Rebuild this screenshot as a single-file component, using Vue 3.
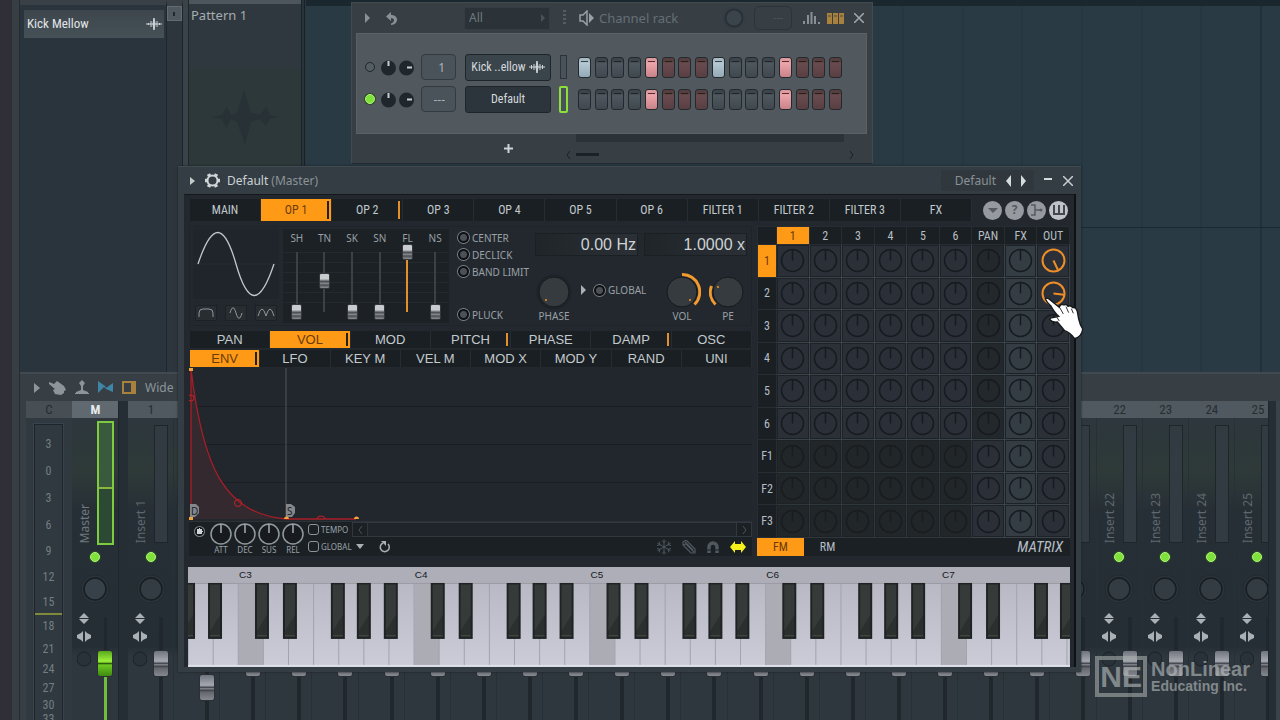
<script setup>
const mainTabs = ['MAIN', 'OP 1', 'OP 2', 'OP 3', 'OP 4', 'OP 5', 'OP 6', 'FILTER 1', 'FILTER 2', 'FILTER 3', 'FX']
const targetTabs = ['PAN', 'VOL', 'MOD', 'PITCH', 'PHASE', 'DAMP', 'OSC']
const sourceTabs = ['ENV', 'LFO', 'KEY M', 'VEL M', 'MOD X', 'MOD Y', 'RAND', 'UNI']
const shapers = [
  { name: 'SH', value: 0 },
  { name: 'TN', value: 51 },
  { name: 'SK', value: 0 },
  { name: 'SN', value: 0 },
  { name: 'FL', value: 100 },
  { name: 'NS', value: 0 },
]
const toggles = ['CENTER', 'DECLICK', 'BAND LIMIT', 'PLUCK']
const envKnobs = ['ATT', 'DEC', 'SUS', 'REL']
const matrixCols = ['1', '2', '3', '4', '5', '6', 'PAN', 'FX', 'OUT']
const matrixRows = ['1', '2', '3', '4', '5', '6', 'F1', 'F2', 'F3']

function cellClass(r, c) {
  return {
    dim: r > 5 && c < 6,
    pan: c === 6 && r < 6,
    fx: c === 7,
    hot: c === 8 && r < 2,
  }
}
function needle(r, c) {
  if (c === 8 && r === 0) return 155
  if (c === 8 && r === 1) return 97
  return 0
}

const channels = [
  { name: 'Kick ..ellow', num: '1', on: false, wave: true, steps: [0, 4, 8, 12] },
  { name: 'Default', num: '---', on: true, wave: false, steps: [4, 12] },
]

const ruler = [
  ['3', 27], ['0', 27], ['3', 27], ['6', 27], ['9', 25], ['12', 27], ['15', 24],
  ['18', 24], ['21', 21], ['24', 20], ['27', 18], ['30', 15], ['33', 14],
]
const inserts = Array.from({ length: 25 }, (_, i) => i + 1)

const white = 176 / 7
const whites = Array.from({ length: 36 }, (_, i) => ({ x: i * white, c: i % 7 === 2 }))
const blacks = []
const octaves = [-126, 50, 226, 402, 578, 754]
for (const o of octaves) {
  for (const d of [17, 45, 93, 119, 146]) blacks.push(o + d)
}
const keyLabels = [1, 2, 3, 4, 5].map((i) => ({ x: octaves[i] + 1, text: 'C' + (i + 2) }))
</script>

<template>
  <main class="desktop">
    <section class="playlist" aria-label="Playlist">
      <svg width="100%" height="100%" aria-hidden="true">
        <path d="M597 0V366M657 0V366M716 0V366M776 0V366M836 0V366M895 0V366" stroke="#233540" />
        <path d="M955 0V366M0 221.500H2000" stroke="#1a2831" stroke-width="1" />
      </svg>
    </section>

    <aside class="picker" aria-label="Browser">
      <div class="desk-edge"></div>
      <div class="frame-edge"></div>
      <div class="clips">
        <button class="clip">
          <span>Kick Mellow</span>
          <svg width="16" height="14" viewBox="0 0 16 14"><path d="M0 7h16M2.500 6v2M5 4v6M11 4v6M13.500 6v2" stroke="#cfd6da" /><path d="M8 1l1 6-1 6-1-6z" fill="#cfd6da" stroke="#cfd6da" /></svg>
        </button>
      </div>
      <div class="clip-scroll"><span class="grip"></span></div>
      <div class="split"></div>
      <div class="pattern">
        <span class="pattern-name">Pattern 1</span>
        <svg class="pattern-wave" width="66" height="54" viewBox="0 0 66 54"><path d="M0 27L10 25 15 17 19 25 25 23 32 0 39 23 48 25 54 17 58 25 66 27 58 29 54 36 48 29 39 32 33 54 25 32 19 29 14 38 10 29Z" fill="#273136" /></svg>
      </div>
      <div class="pattern-edge"></div>
    </aside>

    <section class="rack" aria-label="Channel rack">
      <header class="rack-head">
        <svg class="i-play" width="5" height="10" viewBox="0 0 5 10"><path d="M0 0l5 5-5 5z" fill="#8a9196" /></svg>
        <svg class="i-undo" width="12" height="13" viewBox="0 0 12 13"><path d="M5 0L0 4.500 5 9V6c4 0 4 4 0 5.500v1.500C13 12 13 3 5 3z" fill="#8a9196" /></svg>
        <div class="group">
          <select aria-label="Channel group"><option>All</option></select>
          <svg width="4" height="8" viewBox="0 0 4 8"><path d="M0 0l4 4-4 4z" fill="#4a5359" /></svg>
        </div>
        <span class="dots"></span>
        <svg class="i-spk" width="16" height="16" viewBox="0 0 16 16"><path d="M1 5h3l4-4v14l-4-4H1z" fill="none" stroke="#9aa1a5" stroke-width="1.500" /><path d="M10 3l5 5-5 5z" fill="#9aa1a5" /></svg>
        <span class="rack-title">Channel rack</span>
        <svg class="i-swing" width="24" height="24"><circle cx="12" cy="12" r="11" fill="#343d44" /><circle cx="12" cy="12" r="8.500" fill="#3b444b" stroke="#293138" stroke-width="2" /></svg>
        <span class="lcd">---</span>
        <svg class="i-bars" width="17" height="13" viewBox="0 0 17 13"><path d="M1 12v-3M5 12V3M8.500 12V0M12 12V4M16 12v-2" stroke="#8a9196" stroke-width="2" /></svg>
        <svg class="i-steps" width="17" height="11" viewBox="0 0 17 11"><path d="M0 0h5v11H0zM6 0h5v11H6zM12 0h5v11h-5z" fill="#a8823c" /><path d="M1 3h3M7 3h3M13 3h3" stroke="#4a4a3c" /></svg>
        <button class="plain" aria-label="Close channel rack"><svg width="10" height="10" viewBox="0 0 10 10"><path d="M0 0l10 10M10 0L0 10" stroke="#a3aaae" stroke-width="1.500" /></svg></button>
      </header>
      <div class="rack-body">
        <div v-for="ch in channels" :key="ch.name" class="channel">
          <span class="led" :class="{ lit: ch.on }"></span>
          <svg width="15" height="17" viewBox="0 0 15 17"><circle cx="7.500" cy="9" r="7.500" fill="#20272c" /><path d="M7.500 7V2" stroke="#c7ced2" stroke-width="2" /></svg>
          <svg width="15" height="17" viewBox="0 0 15 17"><circle cx="7.500" cy="9" r="7.500" fill="#20272c" /><path d="M8 8.500h5" stroke="#c7ced2" stroke-width="2" /></svg>
          <input class="track-no" type="text" :value="ch.num" aria-label="Mixer track">
          <button class="ch-name" :class="{ sel: ch.on }">{{ ch.name }}<svg v-if="ch.wave" width="16" height="14" viewBox="0 0 16 14"><path d="M0 7h16M2.500 5v4M5 4v6M11 4v6M13.500 5v4" stroke="#cfd6da" /><path d="M8 1l1 6-1 6-1-6z" fill="#cfd6da" stroke="#cfd6da" /></svg></button>
          <span class="ch-sel" :class="{ lit: ch.on }"></span>
          <div class="steps">
            <input v-for="n in 16" :key="n" type="checkbox" class="step" :class="{ red: (n - 1) % 8 > 3 }" :checked="ch.steps.includes(n - 1)" :aria-label="ch.name + ' step ' + n">
          </div>
        </div>
      </div>
      <footer class="rack-foot">
        <button class="plain add" aria-label="Add channel"><svg width="9" height="9" viewBox="0 0 9 9"><path d="M4.500 0v9M0 4.500h9" stroke="#cdd3d6" stroke-width="2" /></svg></button>
        <div class="rack-bar">
          <div class="rack-shade"></div>
          <div class="rack-scroll">
            <svg width="5" height="8" viewBox="0 0 5 8"><path d="M4 0L1 4l3 4" fill="none" stroke="#1a2126" /></svg>
            <span class="rack-thumb"></span>
            <svg width="5" height="8" viewBox="0 0 5 8"><path d="M1 0l3 4-3 4" fill="none" stroke="#1a2126" /></svg>
          </div>
        </div>
      </footer>
    </section>

    <section class="mixer" aria-label="Mixer">
      <header class="mixer-bar">
        <svg width="6" height="10" viewBox="0 0 6 10"><path d="M0 0l6 5-6 5z" fill="#8e959a" /></svg>
        <svg width="17" height="15" viewBox="0 0 17 15"><path d="M0 2l5 2 3-3 7 5 2 4-2 1v2l-3 2-6-1-2-4 2-1-6-5z" fill="#8e959a" /></svg>
        <svg width="14" height="15" viewBox="0 0 14 15"><path d="M7 0l3 3-2 3v4l5 2v1H1v-1l5-2V6L4 3zM0 13h14v1H0z" fill="#8e959a" /></svg>
        <svg width="15" height="13" viewBox="0 0 15 13"><path d="M0 0l7 5 1 2 7-5v9L8 8 6 6 0 12z" fill="#3f86a6" /></svg>
        <svg width="14" height="13" viewBox="0 0 14 13"><path d="M1 1h12v11H1z" fill="none" stroke="#a8823c" stroke-width="2" /><path d="M9 1h4v11H9z" fill="#a8823c" /></svg>
        <span>Wide</span>
      </header>
      <div class="mixer-main">
        <div class="ruler">
          <div class="strip-no">C</div>
          <div class="scale">
            <span v-for="(r, i) in ruler" :key="i" :style="{ height: r[1] + 'px' }">{{ r[0] }}</span>
          </div>
        </div>
        <div class="strip master">
          <div class="strip-no">M</div>
          <div class="strip-top"><span class="strip-name">Master</span><span class="meter"></span></div>
          <span class="led lit"></span>
          <svg class="pan-knob" width="32" height="32"><circle cx="16" cy="16" r="14" fill="#2b343b" stroke="#222a30" /><circle cx="16" cy="16" r="11" fill="#374149" stroke="#171d21" stroke-width="1.500" /></svg>
          <div class="strip-low">
            <svg width="14" height="60" viewBox="0 0 14 60"><path d="M7 4l5 5H2zM7 15l5-5H2zM6 22v11L4 31 0 29v-3l4-2zM8 22l2 2 4 2v3l-4 2-2 2z" fill="#a9b1b6" /><circle cx="7" cy="50" r="7" fill="#2a3239" stroke="#1b2227" /></svg>
            <input class="fader" type="range" value="75" aria-label="Master volume">
          </div>
        </div>
        <div class="mixer-gap"></div>
        <div class="strips">
          <div class="strip-grid">
            <div v-for="n in inserts" :key="n" class="strip">
              <div class="strip-no">{{ n }}</div>
              <div class="strip-top"><span class="strip-name">Insert {{ n }}</span><span class="meter"></span></div>
              <span class="led lit"></span>
              <svg class="pan-knob" width="32" height="32"><circle cx="16" cy="16" r="14" fill="#2b343b" stroke="#222a30" /><circle cx="16" cy="16" r="11" fill="#333c43" stroke="#171d21" stroke-width="1.500" /></svg>
              <div class="strip-low">
                <svg width="14" height="60" viewBox="0 0 14 60"><path d="M7 4l5 5H2zM7 15l5-5H2zM6 22v11L4 31 0 29v-3l4-2zM8 22l2 2 4 2v3l-4 2-2 2z" fill="#a9b1b6" /><circle cx="7" cy="50" r="7" fill="#2a3239" stroke="#1b2227" /></svg>
                <input class="fader" type="range" :value="n === 2 ? 57 : 75" :aria-label="'Insert ' + n + ' volume'">
              </div>
            </div>
          </div>
        </div>
        <div class="mixer-gap"></div>
      </div>
    </section>

    <section class="plugin" aria-label="Default (Master)">
      <header class="plugin-head">
        <svg width="5" height="8" viewBox="0 0 5 8"><path d="M0 0l5 4-5 4z" fill="#c3cacd" /></svg>
        <svg width="15" height="15" viewBox="0 0 15 15"><circle cx="7.500" cy="7.500" r="5" fill="none" stroke="#d0d6d9" stroke-width="2" /><path d="M4.500 3L3.500 1M10.500 3l1-2M2.500 7.500H0M15 7.500h-2.500M4.500 12l-1 2M10.500 12l1 2" stroke="#d0d6d9" stroke-width="3.500" /></svg>
        <h1>Default <small>(Master)</small></h1>
        <div class="preset">
          <span>Default</span>
          <button class="plain" aria-label="Previous preset"><svg width="5" height="12" viewBox="0 0 5 12"><path d="M5 0v12L0 6z" fill="#d6dbde" /></svg></button>
          <button class="plain" aria-label="Next preset"><svg width="5" height="12" viewBox="0 0 5 12"><path d="M0 0v12l5-6z" fill="#d6dbde" /></svg></button>
        </div>
        <button class="plain" aria-label="Minimize"><svg width="8" height="10" viewBox="0 0 8 10"><path d="M0 3h8" stroke="#d6dbde" stroke-width="2" /></svg></button>
        <button class="plain" aria-label="Close"><svg width="10" height="10" viewBox="0 0 10 10"><path d="M0 0l10 10M10 0L0 10" stroke="#c9cfd2" stroke-width="1.500" /></svg></button>
      </header>

      <div class="plugin-body">
        <div class="top-row">
          <nav class="tabs main-tabs">
            <button v-for="(t, i) in mainTabs" :key="t" :class="{ active: i === 1, mark: i === 1 || i === 2 }">{{ t }}</button>
          </nav>
          <div class="round-tools">
            <button aria-label="Menu"><svg width="10" height="5" viewBox="0 0 10 5"><path d="M0 0h10L5 5z" fill="#555b61" /></svg></button>
            <button aria-label="Help">?</button>
            <button aria-label="Routing"><svg width="12" height="12" viewBox="0 0 12 12"><path d="M0 1h4v10H0M4 6h5" fill="none" stroke="#555b61" stroke-width="1.500" /><circle cx="10" cy="6" r="1.500" fill="#555b61" /></svg></button>
            <button class="bright" aria-label="Keyboard"><svg width="12" height="10" viewBox="0 0 12 10"><path d="M1 0v9h10V0M6 0v9" fill="none" stroke="#42484e" stroke-width="2" /></svg></button>
          </div>
        </div>

        <div class="panels">
          <div class="left">
            <div class="osc">
              <div class="wave-box">
                <svg class="wave" width="86" height="70" viewBox="0 0 86 70"><path d="M0 35H86" stroke="#262c32" /><path d="M5 35C19-7 31-7 43 35S67 77 81 35" fill="none" stroke="#c3c8cc" stroke-width="1.300" /></svg>
                <div class="shapes">
                  <button aria-label="Clip shape"><svg width="16" height="10" viewBox="0 0 16 10"><path d="M1 9V5q0-4 4-4h6q4 0 4 4v4" fill="none" stroke="#90979c" /></svg></button>
                  <button aria-label="Sine shape"><svg width="14" height="12" viewBox="0 0 14 12"><path d="M1 6C3-1 5-1 7 6s4 7 6 0" fill="none" stroke="#90979c" /></svg></button>
                  <button aria-label="Rectified shape"><svg width="18" height="10" viewBox="0 0 18 10"><path d="M1 8q4-14 8 0q4-14 8 0" fill="none" stroke="#90979c" /></svg></button>
                </div>
              </div>
              <div class="shapers">
                <label v-for="s in shapers" :key="s.name"><span>{{ s.name }}</span><input type="range" :value="s.value" :class="{ full: s.value === 100 }"></label>
              </div>
              <div class="toggles">
                <label v-for="t in toggles" :key="t"><input type="checkbox" class="dot">{{ t }}</label>
              </div>
              <div class="pitch">
                <div class="fields">
                  <input type="text" value="0.00 Hz" aria-label="Frequency offset">
                  <input type="text" value="1.0000 x" aria-label="Frequency ratio">
                </div>
                <div class="osc-knobs">
                  <div class="knob"><svg width="38" height="38"><circle cx="19" cy="19" r="17" fill="#20252b" stroke="#1c2126" /><circle cx="19" cy="19" r="15" fill="#363b40" stroke="#15191c" /><circle cx="11" cy="27" r="1" fill="#f7951d" /></svg>PHASE</div>
                  <svg class="tri" width="5" height="10" viewBox="0 0 5 10"><path d="M0 0l5 5-5 5z" fill="#a9b0b4" /></svg>
                  <label class="global"><input type="checkbox" class="dot">GLOBAL</label>
                  <div class="knob wide"><svg width="38" height="38"><circle cx="19" cy="19" r="15" fill="#363b40" stroke="#15191c" /><path d="M19 1.500A17.500 17.500 0 0 1 31.500 31.500" fill="none" stroke="#f29a2e" stroke-width="3" /><circle cx="27" cy="27" r="1" fill="#f7951d" /></svg>VOL</div>
                  <div class="knob wide"><svg width="38" height="38"><circle cx="19" cy="19" r="15" fill="#363b40" stroke="#15191c" /><path d="M6.500 31.500A17.500 17.500 0 0 1 2.500 13" fill="none" stroke="#f29a2e" stroke-width="3" /><circle cx="9" cy="14" r="1" fill="#f7951d" /></svg>PE</div>
                </div>
              </div>
            </div>
            <nav class="tabs sub">
              <button v-for="(t, i) in targetTabs" :key="t" :class="{ active: i === 1, mark: i === 1 || i === 3 || i === 5 }">{{ t }}</button>
            </nav>
            <nav class="tabs sub">
              <button v-for="(t, i) in sourceTabs" :key="t" :class="{ active: i === 0, mark: i === 0 }">{{ t }}</button>
            </nav>
            <svg class="env" width="100%" height="153">
              <path d="M0 38.500H2000M0 76.500H2000M0 114.500H2000" stroke="#1a1e23" />
              <path d="M0 19.500H2000M0 57.500H2000M0 95.500H2000M0 133.500H2000" stroke="#21262c" />
              <path d="M2 1C14 102 36 145 97 151H2Z" fill="#33292f" />
              <path d="M97 0V151" stroke="#50565c" />
              <path d="M2 151V1C14 102 36 145 97 151H167" fill="none" stroke="#a81e26" stroke-width="1.300" />
              <path d="M1 136h6l3 3v6l-4 4H1zM97 136h5l4 3v6l-3 4h-6z" fill="#84888d" />
              <text x="2" y="147" class="flag">D</text><text x="98" y="147" class="flag">S</text>
              <g fill="none" stroke="#c4222a"><circle cx="2" cy="30" r="3" /><circle cx="49" cy="135" r="3.500" /><path d="M128 151a4 3 0 0 1 8 0" /></g>
              <path d="M0 0h4v3H0zM0 149h4v3H0zM95 151a2.500 2.500 0 0 1 5 0zM165 151a2.500 2.500 0 0 1 5 0z" fill="#f2a33a" />
            </svg>
            <div class="env-ctl">
              <input type="radio" class="env-on" checked aria-label="Envelope enabled">
              <div v-for="k in envKnobs" :key="k" class="mini"><svg width="22" height="22"><circle cx="11" cy="11" r="10" fill="#171b1f" stroke="#929a9f" stroke-width="1.500" /><path d="M11 10V1" stroke="#a6adb1" stroke-width="1.500" /></svg>{{ k }}</div>
              <div class="checks">
                <label><input type="checkbox">TEMPO</label>
                <label><input type="checkbox">GLOBAL</label>
              </div>
              <div class="env-side">
                <div class="env-scroll"><button class="plain" aria-label="Scroll left"><svg width="5" height="8" viewBox="0 0 5 8"><path d="M4 0L1 4l3 4" fill="none" stroke="#4c545a" /></svg></button><span></span><button class="plain" aria-label="Scroll right"><svg width="5" height="8" viewBox="0 0 5 8"><path d="M1 0l3 4-3 4" fill="none" stroke="#4c545a" /></svg></button></div>
                <div class="env-tools">
                  <button class="plain" aria-label="Envelope menu"><svg width="8" height="5" viewBox="0 0 8 5"><path d="M0 0h8L4 5z" fill="#a9b1b5" /></svg></button>
                  <button class="plain reset" aria-label="Reset"><svg width="12" height="13" viewBox="0 0 12 13"><path d="M9 4a4.500 4.500 0 1 1-5-1" fill="none" stroke="#a9b1b5" stroke-width="1.500" /><path d="M2 1h5v5z" fill="#a9b1b5" /></svg></button>
                  <button class="plain push" aria-label="Freeze"><svg width="16" height="16" viewBox="0 0 16 16"><path d="M8 0.500v15M1.500 4.300l13 7.400M14.500 4.300l-13 7.400M6 1.500l2 2 2-2M6 14.500l2-2 2 2M1 6.500l3-0.800-0.800-3M15 9.500l-3 0.800 0.800 3M1 9.500l3 0.800-0.800 3M15 6.500l-3-0.800 0.800-3" fill="none" stroke="#50585f" /></svg></button>
                  <button class="plain" aria-label="Draw"><svg width="14" height="14" viewBox="0 0 14 14"><path d="M1 2l3-2 9 9v4H9L1 5zM3 2l8 8M1 5l3-1 8 8" fill="none" stroke="#50585f" stroke-width="1.200" /></svg></button>
                  <button class="plain" aria-label="Snap"><svg width="14" height="14" viewBox="0 0 14 14"><path d="M3 13V7a4 4 0 0 1 8 0v6" fill="none" stroke="#50585f" stroke-width="3.500" /><path d="M0 10h14" stroke="#1b2025" /></svg></button>
                  <button class="plain" aria-label="Slide"><svg width="16" height="12" viewBox="0 0 16 12"><path d="M0 6l5-6v3h6V0l5 6-5 6V9H5v3z" fill="#f6f01c" /></svg></button>
                </div>
              </div>
            </div>
          </div>

          <div class="right">
            <table class="matrix">
              <thead>
                <tr><th class="corner"></th><th v-for="(c, i) in matrixCols" :key="c" scope="col" :class="{ on: i === 0 }">{{ c }}</th></tr>
              </thead>
              <tbody>
                <tr v-for="(r, ri) in matrixRows" :key="r">
                  <th scope="row" :class="{ on: ri === 0 }">{{ r }}</th>
                  <td v-for="(c, ci) in matrixCols" :key="c" :class="cellClass(ri, ci)">
                    <svg width="25" height="25" viewBox="0 0 25 25"><circle cx="12.500" cy="12.500" r="11" /><path d="M12.500 12.500V2" :transform="'rotate(' + needle(ri, ci) + ' 12.5 12.5)'" /></svg>
                  </td>
                </tr>
              </tbody>
            </table>
            <div class="matrix-foot">
              <button class="on">FM</button>
              <button>RM</button>
              <em>MATRIX</em>
            </div>
          </div>
        </div>

        <svg class="piano" viewBox="0 0 883 100" role="img" aria-label="Keyboard">
          <defs>
            <linearGradient id="ivory" x1="0" y1="0" x2="0" y2="1"><stop offset="0" stop-color="#b4b5c0" /><stop offset="1" stop-color="#cbccd8" /></linearGradient>
          </defs>
          <rect width="883" height="100" fill="url(#ivory)" />
          <rect width="883" height="16" fill="#adaeb8" />
          <rect y="98" width="883" height="2" fill="#dfe0e8" />
          <g v-for="w in whites" :key="w.x">
            <rect v-if="w.c" :x="w.x" y="17" :width="white" height="81" fill="#acacb5" />
            <path :d="'M' + w.x + ' 17V98'" stroke="#a2a3ae" />
          </g>
          <path d="M0 16.500H883" stroke="#9b9ca6" />
          <g v-for="b in blacks" :key="b">
            <rect :x="b" y="16" width="14" height="56" fill="#1f2323" />
            <rect :x="b + 2" y="17" width="10" height="52" fill="#2b2f2e" />
            <path :d="'M' + (b + 12) + ' 30V48L' + (b + 2) + ' 64V18h10z'" fill="#363a38" />
            <path :d="'M' + (b + 2) + ' 69h10'" stroke="#50544f" />
          </g>
          <text v-for="k in keyLabels" :key="k.text" :x="k.x" y="11" class="key-label">{{ k.text }}</text>
        </svg>
      </div>
    </section>

    <svg class="cursor" width="40" height="43" viewBox="880 395 120 129" aria-hidden="true"><path d="M884 400q5-4 12 2l30 24q4-12 14-7 7-4 12 4 8-5 14 4 10-3 14 12l4 22q4 18 12 30-2 22-24 29-14-19-30-24-12-14-22-26-16 2-23-8 2-6 14-6l13-3q-12-10-24-32-12-10-16-21z" fill="#fff" stroke="#15181b" stroke-width="4" /><path d="M928 428l10 18M946 424l8 18M962 430l6 14M918 455l8 12" stroke="#33373a" stroke-width="3" fill="none" /></svg>

    <div class="watermark">
      <span class="ne">NE</span>
      <span class="brand"><b>NonLinear</b><b class="small">Educating Inc.</b></span>
    </div>
  </main>
</template>

<style>
body { background: #2d353c; }
</style>

<style scoped>
* { box-sizing: border-box; }
.desktop {
  position: relative;
  min-height: 100vh;
  overflow: hidden;
  background: #2d363d;
  font-family: "Noto Sans", "Open Sans", sans-serif;
  font-size: 12px;
  line-height: 16px;
  color: #aab2b7;
}
button, input, select { font: inherit; color: inherit; margin: 0; padding: 0; border: 0; background: none; border-radius: 0; }
svg { display: block; flex: none; }
.plain { display: flex; align-items: center; justify-content: center; }

.playlist { position: absolute; left: 306px; right: 0; top: 0; height: 372px; background: #293a45; border-top: 6px solid #1b272f; }

/* picker */
.picker { position: absolute; left: 0; top: 0; bottom: 0; width: 305px; display: flex; }
.desk-edge { width: 12px; background: #302e37; }
.frame-edge { width: 8px; background: #373f45; border-right: 1px solid #242c31; }
.clips { width: 147px; background: #2a343c; border-top: 5px solid #394147; border-right: 1px solid #1f272c; padding: 5px 2px 5px 4px; }
.clip { display: flex; width: 100%; height: 28px; align-items: center; justify-content: space-between; padding: 0 2px 0 3px; background: linear-gradient(#3d464d, #465057); color: #e1e5e7; font-family: "Liberation Sans Narrow", "Roboto Condensed", Roboto, sans-serif; font-size: 13px; }
.clip-scroll { width: 16px; background: #2d363d; border-top: 6px solid #394147; border-right: 1px solid #1d2429; }
.grip { display: block; width: 15px; height: 15px; background: #505960; border: 1px solid #626b71; }
.grip::after { content: ""; display: block; width: 2px; height: 4px; margin: 5px; background: #1f272c; }
.split { width: 6px; background: #3a434a; border-right: 1px solid #1f272c; }
.pattern { width: 112px; padding: 3px 2px; background: linear-gradient(#2f383e 0 62px, #2c3839 68px); border-top: 4px solid #4c565c; font-size: 13px; color: #a5adb1; }
.pattern-name { display: block; }
.pattern-wave { margin: 67px auto 0 21px; }
.pattern-edge { flex: 1; background: #28343c; border-left: 1px solid #1b2328; border-right: 1px solid #182127; }

/* channel rack */
.rack { position: absolute; left: 351px; top: 2px; width: 522px; background: #373f45; border: 1px solid #434b50; border-bottom-color: #232b30; padding: 0 5px 0 4px; }
.rack-head { display: flex; align-items: center; height: 30px; padding: 0 3px 0 9px; }
.i-undo { margin-left: 16px; }
.group { display: flex; align-items: center; width: 86px; height: 23px; margin-left: 66px; padding: 0 4px; background: #2b3339; border: 1px solid #353d43; color: #6f787d; }
.group select { appearance: none; flex: 1; min-width: 0; }
.dots { width: 3px; height: 16px; margin: 0 13px; background: repeating-linear-gradient(#565e64 0 2px, transparent 2px 4px); }
.rack-title { margin-left: 4px; font-size: 13px; color: #656e74; white-space: nowrap; }
.i-swing { margin-left: auto; margin-right: 8px; }
.lcd { width: 38px; height: 24px; margin-right: 11px; border: 1px solid #2c343a; border-radius: 5px; text-align: right; padding: 2px 8px; color: #4d565c; font-size: 10px; }
.i-steps { margin: 0 10px 0 7px; }
.rack-body { height: 101px; padding: 17px 0 0 8px; background: #51595f; border: 1px solid #5a6268; }
.channel { display: flex; align-items: center; height: 32px; }
.led { flex: none; width: 10px; height: 10px; border-radius: 50%; background: #555e64; border: 1px solid #20272b; }
.led.lit { background: #7ee23a; box-shadow: 0 0 0 1px #2c4a22; border-color: #b4f585; }
.channel svg { margin-left: 3px; }
.channel .led + svg { margin-left: 6px; }
.track-no { width: 35px; height: 26px; margin-left: 7px; padding-right: 10px; background: #4b535a; border: 1px solid #333b41; border-radius: 4px; text-align: right; color: #a9b1b6; font-size: 12px; }
.ch-name { display: flex; flex: none; align-items: center; justify-content: center; width: 86px; height: 27px; margin-left: 9px; background: #3a444b; border: 1px solid #1e262b; border-radius: 3px; color: #d5dadd; font-family: "Liberation Sans Narrow", "Roboto Condensed", Roboto, sans-serif; font-size: 12px; white-space: nowrap; }
.ch-name.sel { background: #2c353b; }
.ch-sel { flex: none; width: 7px; height: 24px; margin: 0 9px; border: 1px solid #2c343a; background: #49525a; }
.ch-sel.lit { width: 9px; height: 27px; margin: 0 8px; border: 2px solid #8be03c; border-radius: 2px; }
.steps { display: grid; grid-template-columns: repeat(16, 1fr); width: 268px; justify-items: center; }
.step { appearance: none; width: 13px; height: 21px; border-radius: 3px; border: 1px solid #232a2f; background: linear-gradient(#20262b, #20262b) center 3px / 7px 1px no-repeat, linear-gradient(#3c444c 0 4px, #50585f 5px, #3f474f); }
.step:checked { background: linear-gradient(#33424b, #33424b) center 3px / 7px 1px no-repeat, linear-gradient(#a9bac4 0 4px, #b5c8d3 5px, #94aab7); }
.step.red { background: linear-gradient(#2a1d1f, #2a1d1f) center 3px / 7px 1px no-repeat, linear-gradient(#55403f 0 4px, #694b4e 5px, #593f42); }
.step.red:checked { background: linear-gradient(#5e2b30, #5e2b30) center 3px / 7px 1px no-repeat, linear-gradient(#dd9ba0 0 4px, #eca6aa 5px, #c98288); }
.rack-foot { display: flex; height: 29px; }
.add { align-self: center; margin-left: 148px; margin-right: 53px; }
.rack-bar { flex: 1; padding-right: 13px; }
.rack-shade { height: 8px; margin: 0 10px; background: #2b3339; }
.rack-scroll { display: flex; align-items: center; height: 25px; }
.rack-thumb { width: 23px; height: 3px; margin: 0 auto 0 5px; background: #1b2227; }

/* mixer */
.mixer { position: absolute; left: 20px; right: 0; top: 372px; bottom: 0; background: #373f45; border-top: 2px solid #414a50; overflow: hidden; padding-left: 6px; display: flex; flex-direction: column; }
.mixer-bar { display: flex; flex: none; align-items: center; gap: 9px; height: 27px; padding-left: 8px; color: #8d959a; }
.mixer-main { display: flex; flex: 1; min-height: 0; background: #2c353c; }
.ruler { width: 46px; background: #303940; }
.strip-no { height: 17px; background: #50595f; text-align: center; font-family: "Liberation Sans Narrow", "Roboto Condensed", Roboto, sans-serif; font-size: 13px; line-height: 17px; color: #262d32; }
.ruler .strip-no { background: #474f55; }
.scale { position: relative; width: 29px; height: 320px; margin: 6px 8px; padding-top: 5px; background: #2f393f; border: 1px solid #1e252a; box-shadow: 0 0 0 1px #3a434a; color: #747d83; font-family: "Liberation Sans Narrow", "Roboto Condensed", Roboto, sans-serif; font-size: 12px; }
.scale span { display: flex; align-items: center; justify-content: center; }
.scale::after { content: ""; position: absolute; left: 0; right: 0; top: 188px; height: 2px; background: #7f8a3a; }
.strip { display: flex; flex-direction: column; align-items: center; border-right: 1px solid #273036; background: linear-gradient(#2d373d 17px, #2e3938 70px, #272f36 110px, #262e35 245px, #2e373e 256px); }
.strip > * { flex: none; }
.strip > .strip-no { width: calc(100% + 1px); margin-right: -1px; }
.strip-top { display: flex; align-items: flex-end; height: 125px; width: 100%; padding-left: 5px; gap: 5px; }
.strip-name { writing-mode: vertical-rl; rotate: 180deg; color: #5f686e; font-size: 12px; line-height: 16px; white-space: nowrap; }
.meter { width: 14px; height: 118px; background: #323b42; border: 1px solid #1e262b; }
.strip > .led { margin-top: 9px; }
.pan-knob { margin-top: 11px; }
.strip-low { display: flex; width: 100%; padding-left: 5px; gap: 6px; margin-top: 3px; }
.strip-low svg { margin-top: 1px; }
.fader { appearance: none; writing-mode: vertical-lr; direction: rtl; flex: none; width: 16px; height: 160px; margin-top: 9px; background: linear-gradient(#20282d, #20282d) center / 4px 100% no-repeat; }
.fader::-webkit-slider-thumb { appearance: none; width: 16px; height: 27px; border-radius: 3px; background: linear-gradient(#70747c, #a4a7af 40%, #8f929a 45%, #2f3338 48%, #7b7e86 54%, #45494f 62%, #63666d 68%, #85888f); border: 1px solid #2a3036; }
.master { width: 46px; border: 0; }
.master .strip-no { color: #e6eaec; font-weight: bold; background: #60696f; }
.master .strip-name { color: #6f787d; }
.master .meter { width: 17px; height: 124px; margin: 0 0 -2px -1px; border: 2px solid #7ecb40; background: linear-gradient(#3a5a3d 64px, #8bb53e 64px 66px, #2c4a33 66px); }
.master .fader { background: linear-gradient(#20282d 34px, #6fbf3c 34px) center / 3px 100% no-repeat; }
.master .fader::-webkit-slider-thumb { background: linear-gradient(#58a81c, #9cf03a 40%, #7fd62a 45%, #2e5a10 50%, #6cc81f 56%, #3f8a10); }
.mixer-gap { width: 10px; background: #262e35; border-left: 1px solid #1f262b; }
.strips { flex: 1; min-width: 0; overflow: hidden; }
.strip-grid { display: grid; grid-template-columns: repeat(25, 1fr); width: calc(100% + 13px); height: 100%; }
.mixer-gap:last-child { width: 12px; border-right: 4px solid #3a434a; }

/* plugin */
.plugin { position: absolute; left: 178px; right: 199px; top: 166px; padding: 0 5px 5px 6px; background: #343d43; border-top: 1px solid #414a50; box-shadow: 0 0 2px #1a2024; }
.plugin-head { display: flex; align-items: center; height: 27px; padding: 0 3px 0 6px; }
.plugin-head h1 { margin: 0 auto 0 7px; font-size: 12px; font-weight: normal; color: #cbd1d4; white-space: nowrap; }
.plugin-head h1 small { font-size: 12px; color: #8b9398; }
.plugin-head svg + svg { margin-left: 10px; }
.preset { display: flex; align-items: center; gap: 10px; height: 21px; padding: 0 8px 0 14px; margin-right: 10px; background: #30383e; color: #899196; }
.plugin-head > .plain + .plain { margin-left: 11px; }
.plugin-body { padding: 4px 4px 0 5px; background: #23282e; border-top: 1px solid #15191c; border-right: 2px solid #0f1214; }
.top-row { display: flex; align-items: center; height: 22px; }
.tabs { display: flex; margin-left: 1px; background: #1a1f23; }
.tabs button { position: relative; flex: 1 1 0; min-width: 0; color: #c2cace; border-right: 1px solid #262c31; white-space: nowrap; }
.tabs .active { background: #ff9a16; color: #6b3b08; }
.tabs .mark::after { content: ""; position: absolute; right: 2px; top: 2px; bottom: 2px; width: 2px; background: #e38f2c; }
.tabs .active.mark::after { background: #22201a; }
.main-tabs { flex: 1; height: 22px; font-family: "Liberation Sans Narrow", "Roboto Condensed", Roboto, sans-serif; font-size: 12px; }
.round-tools { display: flex; gap: 3px; padding: 0 2px 0 11px; }
.round-tools button { display: flex; align-items: center; justify-content: center; width: 19px; height: 19px; border-radius: 50%; background: #969aa0; color: #555b61; font-size: 12px; font-weight: bold; }
.round-tools .bright { background: #c0c4c9; }
.panels { display: flex; gap: 5px; margin-top: 5px; }
.left { flex: 1; min-width: 0; }
.osc { display: flex; height: 100px; padding: 2px 6px 2px 3px; margin-bottom: 5px; background: #23282f; border: 1px solid #1f2429; }
.wave-box { flex: none; width: 86px; }
.wave { background: #20252b; }
.shapes { display: flex; justify-content: space-between; padding: 6px 2px 0; }
.shapes button { display: flex; align-items: center; justify-content: center; width: 22px; height: 16px; background: #282d32; border: 1px solid #1c2125; }
.shapers { display: grid; flex: none; grid-template-columns: repeat(6, 1fr); width: 166px; margin-left: 4px; padding-top: 2px; background: #1c2126; font-size: 10px; }
.shapers label { display: flex; flex-direction: column; align-items: center; background: repeating-linear-gradient(#23292f 0 1px, transparent 1px 10px) 0 21px / 100% 60px no-repeat; }
.shapers span { height: 13px; line-height: 14px; color: #98a0a5; }
.shapers input { appearance: none; writing-mode: vertical-lr; direction: rtl; width: 12px; height: 76px; background: linear-gradient(#3b4147, #3b4147) center / 2px 60px no-repeat; }
.shapers .full { background-image: linear-gradient(#e38f2c, #e38f2c); }
.shapers input::-webkit-slider-thumb { appearance: none; width: 11px; height: 16px; border-radius: 2px; border: 1px solid #33383d; background: linear-gradient(#c9cccf 5px, #8b8f93 6px, #3a3e42 8px, #94989c 9px, #4a4e52 11px, #8d9195); }
.toggles { display: flex; flex: none; flex-direction: column; width: 82px; padding-left: 8px; font-size: 10px; color: #99a1a6; }
.toggles label { display: flex; align-items: center; gap: 2px; height: 17px; white-space: nowrap; }
.toggles label:last-child { margin-top: auto; }
.dot { appearance: none; flex: none; width: 13px; height: 13px; border-radius: 50%; background: radial-gradient(#4c5157 0 3px, #0f1214 4px 5px, #7b8186 6px); }
.pitch { flex: 1; min-width: 0; padding: 4px 0 0 4px; }
.fields { display: flex; gap: 6px; margin-right: -2px; }
.fields input { flex: 1; min-width: 0; height: 23px; padding-right: 1px; background: linear-gradient(90deg, #20252a, #2b3036); border: 1px solid #1b2024; text-align: right; font-family: "Liberation Sans", Arial, sans-serif; font-size: 16px; color: #cdd3d6; }
.osc-knobs { display: flex; margin: 17px -6px 0 0; font-size: 10px; color: #98a0a5; }
.knob { display: flex; flex-direction: column; align-items: center; width: 38px; line-height: 10px; }
.knob.wide { width: 46px; }
.tri { margin: 12px 7px 0 8px; }
.global { display: flex; align-items: center; gap: 2px; height: 34px; margin-right: auto; }
.sub { height: 17px; margin-bottom: 2px; font-family: "Liberation Sans", Arial, sans-serif; font-size: 13px; }
.sub + .sub { margin-bottom: 1px; }
.env { background: #22262d; }
.flag { font-family: "Noto Sans", sans-serif; font-size: 10px; fill: #1b1f23; }
.env-ctl { display: flex; height: 35px; background: #1b2025; border-top: 1px solid #2b3238; }
.env-on { appearance: none; width: 11px; height: 11px; margin: 4px 4px 0 5px; border-radius: 50%; background: radial-gradient(#cfd5d8 0 3px, #14181b 3px 4px, #7b8287 5px); }
.mini { display: flex; flex-direction: column; align-items: center; width: 24px; padding-top: 1px; font-size: 8px; line-height: 9px; color: #9aa2a7; }
.checks { display: flex; flex-direction: column; gap: 6px; width: 47px; padding: 2px 0 0 3px; font-size: 8px; line-height: 11px; color: #9aa2a7; }
.checks label { display: flex; align-items: center; gap: 2px; }
.checks input { appearance: none; flex: none; width: 11px; height: 11px; border: 1px solid #8d959a; border-radius: 3px; }
.env-side { flex: 1; }
.env-scroll { display: flex; height: 15px; background: #20252b; border: 1px solid #30373d; }
.env-scroll button { width: 14px; background: #1b2025; }
.env-scroll span { flex: 1; border: 1px solid #30373d; border-width: 0 1px; }
.env-tools { display: flex; align-items: center; height: 19px; gap: 10px; padding: 0 6px 0 4px; }
.env-tools .reset { margin-left: 5px; }
.env-tools .push { margin-left: auto; }

.right { width: 313px; }
.matrix { width: 100%; height: 312px; table-layout: fixed; border-collapse: collapse; font-family: "Liberation Sans Narrow", "Roboto Condensed", Roboto, sans-serif; font-size: 12px; }
.matrix th { padding: 0; font-weight: normal; background: #1a1f23; color: #b6bec3; border: 1px solid #262c31; text-align: center; }
.matrix thead th { height: 18px; line-height: 14px; }
.matrix .corner { width: 19px; }
.matrix th.on { background: #ff9a16; color: #6b3b08; border-color: #2b2f33; }
.matrix td { padding: 0; height: 32px; background: #2b3038; border: 1px solid #3a434a; box-shadow: inset 0 0 0 1px #1d2227; }
.matrix td svg { margin: 0 auto; fill: none; stroke: #161b20; stroke-width: 1.5; }
.matrix td.pan { background: #23282d; }
.matrix td.fx { background: #353d44; }
.matrix td.dim { background: #212628; border-color: #30373c; }
.matrix td.dim svg { stroke: #191d1f; }
.matrix td.hot svg { stroke: #ee8e28; stroke-width: 2; }
.matrix-foot { display: flex; align-items: center; height: 18px; background: #1b2025; font-family: "Liberation Sans Narrow", "Roboto Condensed", Roboto, sans-serif; font-size: 12px; color: #b6bec3; }
.matrix-foot button { width: 47px; height: 18px; }
.matrix-foot .on { background: #ff9a16; color: #6b3b08; }
.matrix-foot em { margin: 0 7px 0 auto; font-size: 15px; color: #b6bec3; }
.piano { width: calc(100% + 1px); height: auto; margin: 11px 0 0 -1px; }
.key-label { font-family: "Liberation Sans Narrow", "Liberation Sans", Arial, sans-serif; font-size: 10px; fill: #17191b; }

.cursor { position: absolute; left: 1044px; top: 297px; }
.watermark { position: absolute; right: 30px; bottom: 23px; display: flex; align-items: center; gap: 4px; opacity: .6; font-family: "Liberation Sans", Arial, sans-serif; color: #b9bebf; }
.ne { width: 52px; height: 41px; border: 4px solid #a5acab; text-align: center; font-size: 30px; line-height: 34px; font-weight: bold; }
.brand { display: flex; flex-direction: column; }
.brand b { font-size: 20px; line-height: 19px; }
.brand .small { font-size: 14px; line-height: 15px; }
</style>
